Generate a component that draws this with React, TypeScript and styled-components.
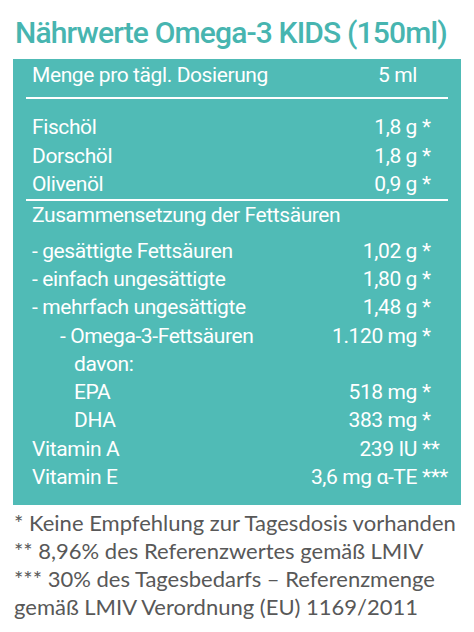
import styled, { createGlobalStyle } from 'styled-components'

const GlobalStyle = createGlobalStyle`
  html, body {
    margin: 0;
    padding: 0;
    background: #ffffff;
  }
`

const Page = styled.div`
  width: 474px;
  height: 632px;
  padding: 15px 13px 0 13px;
  box-sizing: border-box;
  display: flex;
  flex-direction: column;
`

const Title = styled.h1`
  margin: 0 0 0 2px;
  font-family: Roboto, sans-serif;
  font-weight: 500;
  font-size: 30px;
  line-height: 36px;
  color: #47b5b0;
  letter-spacing: -0.85px;
  white-space: nowrap;
`

const Panel = styled.div`
  margin-top: 8px;
  background: #50bbb6;
  padding: 2px 13px 14px 13px;
  display: flex;
  flex-direction: column;
  color: #ffffff;
  font-family: Roboto, sans-serif;
  font-weight: 400;
  font-size: 21px;
  letter-spacing: -0.4px;
`

const Row = styled.div<{ $indent?: number }>`
  display: grid;
  grid-template-columns: 1fr auto 31px;
  align-items: center;
  height: 28.3px;
  padding-left: ${({ $indent }) => 6 + ($indent ?? 0)}px;
  white-space: nowrap;
`

const Value = styled.span`
  text-align: right;
`

const Stars = styled.span`
  padding-left: 5px;
  text-align: left;
  overflow: visible;
`

const Rule = styled.div<{ $top: number }>`
  height: 2px;
  background: #ffffff;
  margin-top: ${({ $top }) => $top}px;
`

const Spacer = styled.div<{ $h: number }>`
  height: ${({ $h }) => $h}px;
`

const Notes = styled.div`
  margin-top: 4px;
  padding-left: 1px;
  font-family: Lato, 'Open Sans', sans-serif;
  font-size: 22px;
  line-height: 28px;
  color: #585858;
`

type Item = { label: string; value?: string; stars?: string; indent?: number }

const oils: Item[] = [
  { label: 'Fischöl', value: '1,8 g', stars: '*' },
  { label: 'Dorschöl', value: '1,8 g', stars: '*' },
  { label: 'Olivenöl', value: '0,9 g', stars: '*' },
]

const acids: Item[] = [
  { label: '- gesättigte Fettsäuren', value: '1,02 g', stars: '*' },
  { label: '- einfach ungesättigte', value: '1,80 g', stars: '*' },
  { label: '- mehrfach ungesättigte', value: '1,48 g', stars: '*' },
  { label: '- Omega-3-Fettsäuren', value: '1.120 mg', stars: '*', indent: 28 },
  { label: 'davon:', indent: 42 },
  { label: 'EPA', value: '518 mg', stars: '*', indent: 42 },
  { label: 'DHA', value: '383 mg', stars: '*', indent: 42 },
  { label: 'Vitamin A', value: '239 IU', stars: '**' },
  { label: 'Vitamin E', value: '3,6 mg α-TE', stars: '***' },
]

function NutrientRow({ item }: { item: Item }) {
  return (
    <Row $indent={item.indent}>
      <span>{item.label}</span>
      <Value>{item.value}</Value>
      <Stars>{item.stars}</Stars>
    </Row>
  )
}

export default function App() {
  return (
    <>
      <GlobalStyle />
      <Page>
        <Title>Nährwerte Omega-3 KIDS (150ml)</Title>
        <Panel>
          <NutrientRow item={{ label: 'Menge pro tägl. Dosierung', value: '5 ml' }} />
          <Rule $top={8} />
          <Spacer $h={14} />
          {oils.map((it) => (
            <NutrientRow key={it.label} item={it} />
          ))}
          <Rule $top={1} />
          <NutrientRow item={{ label: 'Zusammensetzung der Fettsäuren' }} />
          <Spacer $h={7} />
          {acids.map((it) => (
            <NutrientRow key={it.label} item={it} />
          ))}
        </Panel>
        <Notes>
          <div>* Keine Empfehlung zur Tagesdosis vorhanden</div>
          <div>** 8,96% des Referenzwertes gemäß LMIV</div>
          <div>*** 30% des Tagesbedarfs – Referenzmenge</div>
          <div>gemäß LMIV Verordnung (EU) 1169/2011</div>
        </Notes>
      </Page>
    </>
  )
}
